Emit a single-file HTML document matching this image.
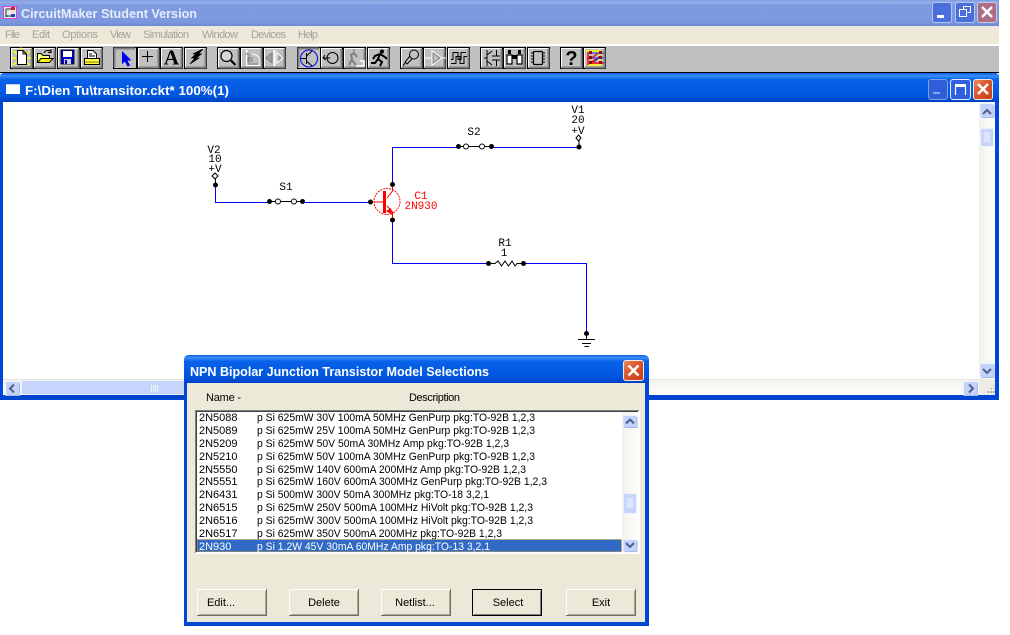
<!DOCTYPE html>
<html><head><meta charset="utf-8"><title>CircuitMaker</title>
<style>
html,body{margin:0;padding:0;background:#fff;width:1010px;height:635px;overflow:hidden}
svg{display:block;position:absolute;left:0;top:0}
text{font-family:"Liberation Sans",sans-serif;white-space:pre}
.t{font-weight:bold;fill:#fff;font-size:12.5px}
.m{font-size:11px;fill:#a5a49c}
.l{font-size:11px;fill:#000}
.c{font-family:"Liberation Mono",monospace;font-size:11px;fill:#000;text-anchor:middle}
.r{font-family:"Liberation Mono",monospace;font-size:11px;fill:#f00;text-anchor:middle}
.bt{font-size:11px;fill:#000;text-anchor:middle}
</style></head><body>
<svg width="1010" height="635" viewBox="0 0 1010 635" xmlns="http://www.w3.org/2000/svg">
<defs>
<linearGradient id="g1" x1="0" y1="0" x2="0" y2="1"><stop offset="0" stop-color="#7f9ce0"/><stop offset=".08" stop-color="#94aeea"/><stop offset=".2" stop-color="#7f9be0"/><stop offset=".85" stop-color="#7c97dd"/><stop offset="1" stop-color="#6c89d6"/></linearGradient>
<linearGradient id="g2" x1="0" y1="0" x2="0" y2="1"><stop offset="0" stop-color="#0a5fe6"/><stop offset=".1" stop-color="#3a8ffa"/><stop offset=".22" stop-color="#0a62ea"/><stop offset=".8" stop-color="#0055dd"/><stop offset="1" stop-color="#0040c4"/></linearGradient>
<linearGradient id="sb" x1="0" y1="0" x2="1" y2="0"><stop offset="0" stop-color="#f3f1ec"/><stop offset="1" stop-color="#fdfdfb"/></linearGradient>
<linearGradient id="sh" x1="0" y1="0" x2="0" y2="1"><stop offset="0" stop-color="#f3f1ec"/><stop offset="1" stop-color="#fdfdfb"/></linearGradient>
<linearGradient id="rb" x1="0" y1="0" x2="1" y2="1"><stop offset="0" stop-color="#e88a6a"/><stop offset=".4" stop-color="#dc5a30"/><stop offset="1" stop-color="#c83a12"/></linearGradient>
<g id="b"><rect x=".5" y=".5" width="22" height="21" fill="#c0c0c0" stroke="#000"/><path d="M1.5 19.5V1.5H20.5" fill="none" stroke="#fff"/><path d="M2 20.5H21.5V2" fill="none" stroke="#808080" stroke-width="2"/></g>
<g id="bp"><rect x=".5" y=".5" width="23" height="21" fill="#c0c0c0" stroke="#000"/><path d="M1.5 20V1.5H22" fill="none" stroke="#808080" stroke-width="2"/></g>
<g id="sbtn"><rect x=".5" y=".5" width="14" height="14" rx="1.5" fill="#c3d3fb" stroke="#eef2fd"/><path d="M14.5 2V14.5H2" fill="none" stroke="#a5b9ec"/></g>
<g id="sbtn2"><rect x=".5" y=".5" width="14" height="12" rx="1.5" fill="#c3d3fb" stroke="#eef2fd"/><path d="M14.5 2V12.5H2" fill="none" stroke="#a5b9ec"/></g>
<g id="pb"><rect x=".5" y=".5" width="69" height="26" fill="#ece9d8" stroke="#fff"/><path d="M69.5 0V26.5H0" fill="none" stroke="#716f64"/><path d="M68.5 2V25.5H2" fill="none" stroke="#aca899"/></g>
</defs>

<!-- main frame -->
<rect x="0" y="0" width="999" height="26" fill="url(#g1)"/>
<rect x="0" y="26" width="999" height="18" fill="#ece9d8"/>
<rect x="0" y="44" width="999" height="2" fill="#fff"/>
<rect x="0" y="46" width="999" height="26" fill="#c0c0c0"/>
<rect x="0" y="72" width="999" height="1" fill="#000"/>

<!-- app icon -->
<rect x="3.5" y="6.5" width="13" height="12" fill="#e8e8e8" stroke="#e040e0"/>
<path d="M6 9H14M6 9V16H14" fill="none" stroke="#333"/>
<rect x="11" y="7" width="4" height="3" fill="#d02020"/><rect x="11" y="14" width="4" height="3" fill="#2040d0"/><rect x="5" y="15" width="3" height="2" fill="#20a040"/>
<text class="t" x="21" y="18" textLength="176" lengthAdjust="spacingAndGlyphs" style="font-size:13px;fill:#e6ecfb">CircuitMaker Student Version</text>

<!-- main caption buttons -->
<rect x="932.5" y="2.5" width="19" height="20" rx="2.5" fill="#4a6edc" stroke="#b5c5f0"/><rect x="937" y="15" width="7" height="3" fill="#fff"/>
<rect x="955.5" y="2.5" width="19" height="20" rx="2.5" fill="#4a6edc" stroke="#b5c5f0"/><path d="M963.5 9.5V6.5H970.5V12.5H967.5M959.5 9.5H966.5V16.5H959.5Z" fill="none" stroke="#fff"/>
<rect x="977.5" y="2.5" width="19" height="20" rx="2.5" fill="#ad6d84" stroke="#c8c8e8"/><path d="M982 7L992 17M992 7L982 17" stroke="#fff" stroke-width="2.5"/>

<!-- menus -->
<text class="m" x="5" y="38" textLength="15">File</text>
<text class="m" x="32" y="38" textLength="18">Edit</text>
<text class="m" x="62" y="38" textLength="36">Options</text>
<text class="m" x="110" y="38" textLength="21">View</text>
<text class="m" x="143" y="38" textLength="46">Simulation</text>
<text class="m" x="202" y="38" textLength="36">Window</text>
<text class="m" x="251" y="38" textLength="35">Devices</text>
<text class="m" x="298" y="38" textLength="20">Help</text>

<!-- toolbar -->
<g transform="translate(0,47)">
<use href="#b" x="10"/><use href="#b" x="33"/><use href="#b" x="57"/><use href="#b" x="80"/>
<use href="#bp" x="113"/><use href="#b" x="137"/><use href="#b" x="160"/><use href="#b" x="184"/>
<use href="#b" x="217"/><use href="#b" x="240"/><use href="#b" x="263"/>
<use href="#bp" x="297"/><use href="#b" x="320"/><use href="#b" x="343"/><use href="#b" x="367"/>
<use href="#b" x="400"/><use href="#b" x="423"/><use href="#b" x="447"/>
<use href="#b" x="480"/><use href="#b" x="503"/><use href="#b" x="527"/>
<use href="#b" x="560"/><use href="#b" x="583"/>
</g>
<!-- new -->
<path d="M13 51L17 54M13 65L17 62M30 51L26 54M30 65L26 62M12 58H16M27 58H31M21 47.500V50" stroke="#ffff00" stroke-width="1.500"/>
<path d="M17.500 50.500H23L26.500 54V64.500H17.500Z" fill="#fff" stroke="#000"/>
<path d="M23 50.500V54H26.500" fill="none" stroke="#000"/>
<!-- open -->
<path d="M37.500 62.500V53.500H41L43 55.500H49.500V58" fill="#ffff80" stroke="#000"/>
<path d="M37.500 62.500L41 58.500H53L49.500 62.500Z" fill="#ffff00" stroke="#000"/>
<path d="M44 53C45 50.500 48 49.500 51 51.500M51 49V52.500H48" fill="none" stroke="#000"/>
<!-- save -->
<rect x="61" y="50" width="13" height="14" fill="#0000c8" stroke="#000" stroke-width=".8"/>
<rect x="63" y="51" width="9" height="6" fill="#fff"/>
<rect x="64" y="59" width="7" height="5" fill="#d0d0d0"/><rect x="65" y="60" width="2" height="4" fill="#0000c8"/>
<!-- print -->
<path d="M87.500 50.500H93L96.500 54V58.500H87.500Z" fill="#fff" stroke="#000"/>
<path d="M89 54H92M89 56H95" stroke="#000"/>
<rect x="84.500" y="58.500" width="15" height="6" fill="#ffff40" stroke="#000"/>
<path d="M85 62H99" stroke="#808000"/>
<!-- arrow -->
<path d="M122 51V64L125 61.500L127.500 66.500L130 65.500L127.500 60.500H131.500Z" fill="#0000f0"/>
<!-- plus -->
<path d="M147.500 51V62M142 56.500H153" stroke="#000"/>
<!-- A -->
<text x="171.500" y="64.500" text-anchor="middle" style="font-family:'Liberation Serif',serif;font-weight:bold;font-size:21px;fill:#000">A</text>
<!-- bolt -->
<path d="M190 64L195 58H191.500L196 54H193L203 49L198.500 54H201.500L196 58H199Z" fill="#000" stroke="#000" stroke-width=".7"/>
<!-- magnifier -->
<circle cx="226.500" cy="56" r="5.500" fill="#d8d8d8" stroke="#000" stroke-width="1.200"/>
<path d="M231 60.500L235.500 65" stroke="#000" stroke-width="2.200"/>
<!-- disabled rotate -->
<path d="M245.500 50.500H248M246.500 51V65.500H260V60C259 56 255 54 252 54" fill="none" stroke="#fff"/>
<path d="M245 54H249V64H258" fill="none" stroke="#808080"/>
<path d="M248 58H252V61H248Z" fill="none" stroke="#808080"/>
<!-- disabled flip -->
<path d="M274.500 50V66" stroke="#fff" stroke-width="2"/>
<path d="M272 53L266 58L272 63Z" fill="#a0a0a0" stroke="#808080"/><path d="M277 53L283 58L277 63Z" fill="#a0a0a0" stroke="#fff"/>
<!-- pressed transistor -->
<circle cx="309" cy="58.500" r="8.500" fill="none" stroke="#0000f0" stroke-width="1"/>
<path d="M301 58.500H306M306.500 53V64M306.500 56L312 51M306.500 61L312 66" stroke="#000" stroke-width="1" fill="none"/>
<!-- rotate -->
<circle cx="332.500" cy="58" r="5.500" fill="none" stroke="#000" stroke-width="1"/>
<path d="M323 58H330M325 55L323 58L326 60" stroke="#000" fill="none"/>
<!-- walker disabled -->
<path d="M349 65L352 59L351 55L354 53L357 57M352 60L356 65M353 50.500H354.500" fill="none" stroke="#808080" stroke-width="2"/>
<path d="M356 66H364V61H360" fill="none" stroke="#fff" stroke-width="1.500"/>
<!-- runner -->
<circle cx="382" cy="51.500" r="2" fill="#000"/>
<path d="M371 63L375 63L378 59L380 54L385 57L387 59M380 54L375 56L373 59M378 59L382 62L380 66" fill="none" stroke="#000" stroke-width="2"/>
<!-- probe -->
<circle cx="414" cy="54.500" r="4.500" fill="none" stroke="#000"/>
<path d="M410 56L405 62L407 64L412 59M405 63L403 66" fill="none" stroke="#000"/>
<!-- gate disabled -->
<path d="M425 58H432M442 58H446M432 51V65L442 58Z" fill="none" stroke="#fff"/>
<path d="M433 53V63L440 58Z" fill="none" stroke="#808080"/>
<!-- waveform -->
<path d="M451 59.500H453V52.500H458V59.500H461V52.500H466" fill="none" stroke="#000" stroke-width="1"/>
<path d="M451 63.500H456V56.500H460V63.500H464V56.500H467" fill="none" stroke="#000" stroke-width="1"/>
<!-- components -->
<path d="M487 50V66M487 58L484 58M487 55L492 51M487 61L492 65M496.500 50V56M492 56H500M492 60H500M496.500 60V66" fill="none" stroke="#000" stroke-width="1"/>
<!-- binoculars -->
<path d="M507 55H512V64H507ZM517 55H522V64H517Z" fill="#fff" stroke="#000" stroke-width="1.200"/>
<path d="M508 50H511V54H508ZM518 50H521V54H518ZM512 55H517V59H512Z" fill="#000"/>
<!-- chip -->
<rect x="533.500" y="51.500" width="9" height="13" rx="1" fill="none" stroke="#000" stroke-width="1.200"/>
<path d="M531 53H533M531 56H533M531 59H533M531 62H533M543 53H545M543 56H545M543 59H545M543 62H545" stroke="#000"/>
<!-- help -->
<text x="571.500" y="65" text-anchor="middle" style="font-weight:bold;font-size:20px;fill:#000">?</text>
<!-- pcb -->
<path d="M586 51H600V65H588" fill="none" stroke="#ffff00" stroke-width="1.500"/>
<path d="M588 52V65M587 58H592L598 53M592 62L599 57M592 63H604" fill="none" stroke="#ff0000" stroke-width="1.400"/>
<path d="M590 58H604M590 53H604M594 62L601 56" fill="none" stroke="#2040f0"/>
<g fill="#8a1010"><rect x="589" y="51" width="3" height="3"/><rect x="599" y="51" width="3" height="3"/><rect x="589" y="56" width="3" height="3"/><rect x="599" y="56" width="3" height="3"/><rect x="589" y="61" width="3" height="3"/><rect x="599" y="61" width="3" height="3"/></g>

<!-- MDI window -->
<path d="M0 102V77Q0 73 4 73H995Q999 73 999 77V102Z" fill="url(#g2)"/>
<rect x="0" y="102" width="3" height="298" fill="#0046d8"/>
<rect x="995" y="102" width="4" height="298" fill="#0046d8"/>
<rect x="0" y="395" width="999" height="5" fill="#0044d0"/>
<rect x="3" y="102" width="992" height="293" fill="#fff"/>
<rect x="6" y="84" width="14" height="10" fill="#fff"/><rect x="6" y="84" width="14" height="1" fill="#c0d0f0"/>
<text class="t" x="25" y="95" textLength="204" lengthAdjust="spacingAndGlyphs">F:\Dien Tu\transitor.ckt* 100%(1)</text>
<rect x="928.500" y="79.500" width="19" height="20" rx="2.500" fill="#2f5fd8" stroke="#7f9fe8"/><rect x="933" y="92" width="7" height="2" fill="#8aa5ea"/>
<rect x="950.500" y="79.500" width="20" height="20" rx="2.500" fill="#2f60e0" stroke="#e8eefc"/><path d="M955.500 85.500H965.500V95M955.500 85.500V95" fill="none" stroke="#fff" stroke-width="1.200"/><rect x="955" y="84" width="11" height="3" fill="#fff"/>
<rect x="973.500" y="79.500" width="19" height="20" rx="2.500" fill="url(#rb)" stroke="#f0e8e0"/><path d="M978 84L988 94M988 84L978 94" stroke="#fff" stroke-width="2.500"/>

<!-- scrollbars -->
<rect x="979" y="102" width="16" height="277" fill="url(#sb)"/>
<rect x="3" y="379" width="976" height="16" fill="url(#sh)"/>
<rect x="3" y="379" width="976" height="1" fill="#e8e6dc"/>
<rect x="979" y="379" width="16" height="16" fill="#efede3"/>
<g fill="#b5b3a5"><rect x="993" y="385" width="1" height="1"/><rect x="990" y="388" width="2" height="1"/><rect x="993" y="388" width="1" height="1"/><rect x="987" y="391" width="2" height="2"/><rect x="990" y="391" width="2" height="2"/><rect x="993" y="391" width="2" height="2"/></g>
<use href="#sbtn" x="979.500" y="103"/><path d="M983 114L987 110L991 114" fill="none" stroke="#4d6185" stroke-width="2"/>
<rect x="980.500" y="128.500" width="13" height="18" rx="1.500" fill="#c6d5fb" stroke="#eef2fd"/><path d="M984 133H990M984 135H990M984 137H990M984 139H990M984 141H990" stroke="#f2f5fe"/>
<use href="#sbtn" x="979.500" y="363"/><path d="M983 369L987 373L991 369" fill="none" stroke="#4d6185" stroke-width="2"/>
<use href="#sbtn" x="5" y="381"/><path d="M14 384.500L10 388.500L14 392.500" fill="none" stroke="#4d6185" stroke-width="2"/>
<rect x="21.500" y="380.500" width="165" height="14" rx="1.500" fill="#c5d5fb" stroke="#eef2fd"/>
<path d="M151.500 385V392M153.500 385V392M155.500 385V392M157.500 385V392" stroke="#f2f5fe"/>
<use href="#sbtn" x="963" y="381"/><path d="M969 384.500L973 388.500L969 392.500" fill="none" stroke="#4d6185" stroke-width="2"/>

<!-- circuit -->
<g fill="none" stroke="#0000ff" stroke-width="1" shape-rendering="crispEdges">
<path d="M215.500 185V202.500H269M302 202.500H370.500"/>
<path d="M392.500 220V263.500H488M523 263.500H586.500V333"/>
<path d="M392.500 184V147.500H458M491 147.500H579"/>
</g>
<g fill="#000">
<circle cx="215.500" cy="185" r="2.500"/><circle cx="269.500" cy="201.500" r="2.500"/><circle cx="302.500" cy="201.500" r="2.500"/>
<circle cx="370.500" cy="202" r="2.500"/><circle cx="392.500" cy="184.500" r="2.500"/><circle cx="392.500" cy="220" r="2.500"/>
<circle cx="458.500" cy="146.500" r="2.500"/><circle cx="491.500" cy="146.500" r="2.500"/><circle cx="579" cy="147" r="2.500"/>
<circle cx="488.500" cy="263.500" r="2.500"/><circle cx="523.500" cy="263.500" r="2.500"/><circle cx="586.500" cy="333.500" r="2.500"/>
</g>
<g fill="#fff" stroke="#000" stroke-width="1">
<circle cx="278" cy="201.500" r="2.500"/><circle cx="294" cy="201.500" r="2.500"/>
<circle cx="466" cy="146.500" r="2.500"/><circle cx="482" cy="146.500" r="2.500"/>
<path d="M215 173L218 176L215 179L212 176Z"/><path d="M578.500 135L581 138L578.500 141L576 138Z"/>
</g>
<g stroke="#000" fill="none">
<path d="M272 201.500H275.500M281 201.500H291M297 201.500H300M215.500 179V183"/>
<path d="M461 146.500H463.500M469 146.500H479M485 146.500H489M579 141V145"/>
<path d="M491 263.500H495L498 261L501.500 266L505 261L508.500 266L512 261L515 266L517 263.500H521"/>
<path d="M586.500 335V339M578 339.500H595M582 343.500H591M584.500 346.500H589"/>
</g>
<!-- transistor -->
<g fill="none" stroke="#f00">
<circle cx="387" cy="201.500" r="13" stroke-dasharray="2 1"/>
<path d="M374 202H384M387 198L392.500 191V187M387 206L392.500 212V218"/>
</g>
<rect x="383" y="191" width="3" height="22" fill="#f00"/>
<path d="M392 215L391 208L386 211Z" fill="#f00"/>
<text class="c" x="214" y="153">V2</text><text class="c" x="215" y="162">10</text><text class="c" x="215" y="172">+V</text>
<text class="c" x="286" y="190">S1</text><text class="c" x="474" y="135">S2</text>
<text class="c" x="578" y="113">V1</text><text class="c" x="578" y="123">20</text><text class="c" x="578" y="134">+V</text>
<text class="c" x="505" y="246">R1</text><text class="c" x="504" y="256">1</text>
<text class="r" x="421" y="199">C1</text><text class="r" x="421" y="209">2N930</text>

<!-- dialog -->
<path d="M184 383V360Q184 355 189 355H643Q649 355 649 360V383Z" fill="url(#g2)"/>
<rect x="184" y="383" width="465" height="243" fill="#0048d4"/>
<rect x="187" y="383" width="458" height="239" fill="#ece9d8"/>
<text class="t" x="190" y="376" textLength="299" lengthAdjust="spacingAndGlyphs">NPN Bipolar Junction Transistor Model Selections</text>
<rect x="623.500" y="360.500" width="20" height="20" rx="2.500" fill="url(#rb)" stroke="#f5ece4"/><path d="M628.500 365.500L638.500 375.500M638.500 365.500L628.500 375.500" stroke="#fff" stroke-width="2.500"/>
<text class="l" x="206" y="401" textLength="35">Name -</text>
<text class="l" x="409" y="401" textLength="51">Description</text>

<rect x="195" y="410" width="444" height="143" fill="#fff"/>
<path d="M195.500 553V410.500H639" fill="none" stroke="#808080"/>
<path d="M196.500 552V411.500H638" fill="none" stroke="#404040"/>
<path d="M195 553.500H639.500V410" fill="none" stroke="#fff"/>
<rect x="622" y="412" width="16" height="141" fill="url(#sb)"/>

<text class="l" x="199" y="421">2N5088</text><text class="l" x="257" y="421" textLength="278" lengthAdjust="spacingAndGlyphs">p Si 625mW 30V 100mA 50MHz GenPurp pkg:TO-92B 1,2,3</text>
<text class="l" x="199" y="434">2N5089</text><text class="l" x="257" y="434" textLength="278" lengthAdjust="spacingAndGlyphs">p Si 625mW 25V 100mA 50MHz GenPurp pkg:TO-92B 1,2,3</text>
<text class="l" x="199" y="447">2N5209</text><text class="l" x="257" y="447" textLength="252" lengthAdjust="spacingAndGlyphs">p Si 625mW 50V 50mA 30MHz Amp pkg:TO-92B 1,2,3</text>
<text class="l" x="199" y="460">2N5210</text><text class="l" x="257" y="460" textLength="278" lengthAdjust="spacingAndGlyphs">p Si 625mW 50V 100mA 30MHz GenPurp pkg:TO-92B 1,2,3</text>
<text class="l" x="199" y="473">2N5550</text><text class="l" x="257" y="473" textLength="269" lengthAdjust="spacingAndGlyphs">p Si 625mW 140V 600mA 200MHz Amp pkg:TO-92B 1,2,3</text>
<text class="l" x="199" y="485">2N5551</text><text class="l" x="257" y="485" textLength="290" lengthAdjust="spacingAndGlyphs">p Si 625mW 160V 600mA 300MHz GenPurp pkg:TO-92B 1,2,3</text>
<text class="l" x="199" y="498">2N6431</text><text class="l" x="257" y="498" textLength="232" lengthAdjust="spacingAndGlyphs">p Si 500mW 300V 50mA 300MHz pkg:TO-18 3,2,1</text>
<text class="l" x="199" y="511">2N6515</text><text class="l" x="257" y="511" textLength="276" lengthAdjust="spacingAndGlyphs">p Si 625mW 250V 500mA 100MHz HiVolt pkg:TO-92B 1,2,3</text>
<text class="l" x="199" y="524">2N6516</text><text class="l" x="257" y="524" textLength="276" lengthAdjust="spacingAndGlyphs">p Si 625mW 300V 500mA 100MHz HiVolt pkg:TO-92B 1,2,3</text>
<text class="l" x="199" y="537">2N6517</text><text class="l" x="257" y="537" textLength="245" lengthAdjust="spacingAndGlyphs">p Si 625mW 350V 500mA 200MHz pkg:TO-92B 1,2,3</text>
<rect x="197" y="539.500" width="424.500" height="12.500" fill="#316ac5"/>
<rect x="197.500" y="539.500" width="424" height="12" fill="none" stroke="#c8a040" stroke-dasharray="1 1"/>
<text class="l" x="199" y="550" style="fill:#fff">2N930</text><text class="l" x="257" y="550" textLength="233" lengthAdjust="spacingAndGlyphs" style="fill:#fff">p Si 1.2W 45V 30mA 60MHz Amp pkg:TO-13 3,2,1</text>

<use href="#sbtn2" x="622.500" y="415"/><path d="M626 423.500L630 419.500L634 423.500" fill="none" stroke="#4d6185" stroke-width="2"/>
<rect x="623.500" y="493.500" width="13" height="20" rx="1.500" fill="#c6d5fb" stroke="#eef2fd"/><path d="M627 499H633M627 501H633M627 503H633M627 505H633M627 507H633" stroke="#f2f5fe"/>
<use href="#sbtn2" x="622.500" y="539"/><path d="M626 543L630 547L634 543" fill="none" stroke="#4d6185" stroke-width="2"/>

<!-- dialog buttons -->
<use href="#pb" x="197" y="589"/><text class="bt" x="221" y="606">Edit...</text>
<use href="#pb" x="289" y="589"/><text class="bt" x="324" y="606">Delete</text>
<use href="#pb" x="381" y="589"/><text class="bt" x="415" y="606">Netlist...</text>
<rect x="472" y="589" width="70" height="27" fill="#000"/><rect x="473" y="590" width="68" height="25" fill="#ece9d8"/><path d="M540.500 591V614.500H474" fill="none" stroke="#808080"/>
<text class="bt" x="508" y="606">Select</text>
<use href="#pb" x="566" y="589"/><text class="bt" x="601" y="606">Exit</text>
</svg>
</body></html>
